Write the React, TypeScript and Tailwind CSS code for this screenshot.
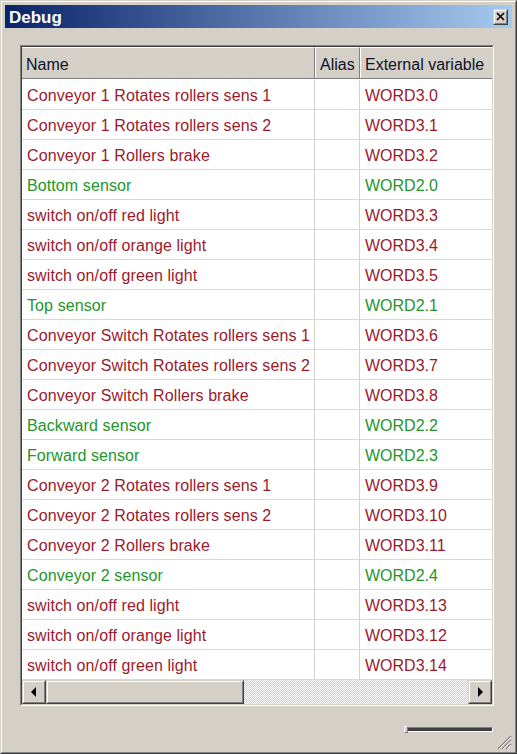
import React from "react";

type Row = { name: string; ext: string; kind: "out" | "in" };

const rows: Row[] = [
  { name: "Conveyor 1 Rotates rollers sens 1", ext: "WORD3.0", kind: "out" },
  { name: "Conveyor 1 Rotates rollers sens 2", ext: "WORD3.1", kind: "out" },
  { name: "Conveyor 1 Rollers brake", ext: "WORD3.2", kind: "out" },
  { name: "Bottom sensor", ext: "WORD2.0", kind: "in" },
  { name: "switch on/off red light", ext: "WORD3.3", kind: "out" },
  { name: "switch on/off orange light", ext: "WORD3.4", kind: "out" },
  { name: "switch on/off green light", ext: "WORD3.5", kind: "out" },
  { name: "Top sensor", ext: "WORD2.1", kind: "in" },
  { name: "Conveyor Switch Rotates rollers sens 1", ext: "WORD3.6", kind: "out" },
  { name: "Conveyor Switch Rotates rollers sens 2", ext: "WORD3.7", kind: "out" },
  { name: "Conveyor Switch Rollers brake", ext: "WORD3.8", kind: "out" },
  { name: "Backward sensor", ext: "WORD2.2", kind: "in" },
  { name: "Forward sensor", ext: "WORD2.3", kind: "in" },
  { name: "Conveyor 2 Rotates rollers sens 1", ext: "WORD3.9", kind: "out" },
  { name: "Conveyor 2 Rotates rollers sens 2", ext: "WORD3.10", kind: "out" },
  { name: "Conveyor 2 Rollers brake", ext: "WORD3.11", kind: "out" },
  { name: "Conveyor 2 sensor", ext: "WORD2.4", kind: "in" },
  { name: "switch on/off red light", ext: "WORD3.13", kind: "out" },
  { name: "switch on/off orange light", ext: "WORD3.12", kind: "out" },
  { name: "switch on/off green light", ext: "WORD3.14", kind: "out" },
];

function Btn3D({ className, children }: { className?: string; children?: React.ReactNode }) {
  return (
    <div className={"box-border border border-t-[#d4d0c8] border-l-[#d4d0c8] border-r-[#404040] border-b-[#404040] bg-[#d4d0c8] " + (className || "")}>
      <div className="box-border w-full h-full border border-t-white border-l-white border-r-[#808080] border-b-[#808080] flex items-center justify-center">
        {children}
      </div>
    </div>
  );
}

export default function App() {
  return (
    <div
      className="w-[517px] h-[754px] box-border border border-t-[#d4d0c8] border-l-[#d4d0c8] border-r-[#404040] border-b-[#404040] bg-[#d4d0c8]"
      style={{ fontFamily: '"Liberation Sans", Arial, sans-serif' }}
    >
      <div className="w-full h-full box-border border border-t-white border-l-white border-r-[#808080] border-b-[#808080] pt-[3px] pl-[3px] pr-[3px] flex flex-col">
        {/* Title bar */}
        <div className="h-[23px] flex items-center justify-between pl-[4px] pr-[4px] bg-[linear-gradient(to_right,#0a246a,#a6caf0)]">
          <span className="text-white font-bold text-[17px] leading-none pt-[1px]">Debug</span>
          <Btn3D className="w-[15px] h-[16px]">
            <svg width="9" height="9" viewBox="0 0 9 9">
              <path d="M1 1 L8 8 M8 1 L1 8" stroke="#000" strokeWidth="1.6" />
            </svg>
          </Btn3D>
        </div>

        {/* Table frame */}
        <div className="mt-[17px] ml-[15px] w-[474px] box-border border border-t-[#808080] border-l-[#808080] border-r-white border-b-white">
          <div className="box-border border border-t-[#404040] border-l-[#404040] border-r-[#d4d0c8] border-b-[#d4d0c8] bg-white text-[16px]">
            {/* Header */}
            <div className="flex h-[32px] bg-[#d4d0c8] text-[#101028] border-b border-b-[#808080]">
              <div className="w-[293px] box-border flex items-center pl-[4px] pt-[3px] border-t border-t-white border-r border-r-[#808080]">Name</div>
              <div className="w-[45px] box-border flex items-center pl-[4px] pt-[3px] border-t border-t-white border-l border-l-white border-r border-r-[#808080]">Alias</div>
              <div className="flex-1 box-border flex items-center pl-[4px] pt-[3px] border-t border-t-white border-l border-l-white overflow-hidden whitespace-nowrap">External variable</div>
            </div>
            {/* Body */}
            <div className="pt-[1px]">
              {rows.map((r, i) => {
                const color = r.kind === "in" ? "text-[#23952a]" : "text-[#9a1a2c]";
                return (
                  <div key={i} className={"flex h-[30px] box-border border-b border-b-[#d8d8d8] " + color}>
                    <div className="w-[293px] box-border flex items-center pl-[5px] pt-[2px] border-r border-r-[#d4d0c8] whitespace-nowrap overflow-hidden tracking-[0.1px]">{r.name}</div>
                    <div className="w-[45px] box-border border-r border-r-[#d4d0c8]" />
                    <div className="flex-1 flex items-center pl-[5px] pt-[2px] whitespace-nowrap">{r.ext}</div>
                  </div>
                );
              })}
            </div>
            {/* Horizontal scrollbar */}
            <div className="flex h-[24px]">
              <Btn3D className="w-[24px] h-[24px]">
                <svg width="8" height="10" viewBox="0 0 8 10">
                  <path d="M6 0 L6 10 L1 5 Z" fill="#000" />
                </svg>
              </Btn3D>
              <Btn3D className="w-[198px] h-[24px]" />
              <div className="flex-1 h-[24px] bg-[repeating-conic-gradient(#d4d0c8_0_25%,#ffffff_0_50%)] bg-[length:2px_2px]" />
              <Btn3D className="w-[24px] h-[24px]">
                <svg width="8" height="10" viewBox="0 0 8 10">
                  <path d="M2 0 L2 10 L7 5 Z" fill="#000" />
                </svg>
              </Btn3D>
            </div>
          </div>
        </div>

        {/* Bottom area: slider and size grip */}
        <div className="flex-1 flex items-end justify-end pb-[2px]">
          <div className="flex items-start">
            <div className="relative mb-[17px] mr-[2px] w-[89px] h-[5px] box-border border border-t-[#808080] border-l-[#808080] border-r-white border-b-white bg-[#404040]">
              <div className="absolute left-[-1px] top-[-2px] w-[4px] h-[7px] bg-[#d4d0c8] border border-t-white border-l-white border-r-[#808080] border-b-[#808080]" />
            </div>
            <svg width="17" height="20" viewBox="0 0 17 20" className="mt-[3px]">
              <path d="M16 6 L3 19" stroke="#808080" strokeWidth="1.5" />
              <path d="M16 10 L7 19" stroke="#808080" strokeWidth="1.5" />
              <path d="M16 14 L11 19" stroke="#808080" strokeWidth="1.5" />
              <path d="M16 7 L4 19" stroke="#ffffff" strokeWidth="0.8" />
              <path d="M16 11 L8 19" stroke="#ffffff" strokeWidth="0.8" />
              <path d="M16 15 L12 19" stroke="#ffffff" strokeWidth="0.8" />
            </svg>
          </div>
        </div>
      </div>
    </div>
  );
}
